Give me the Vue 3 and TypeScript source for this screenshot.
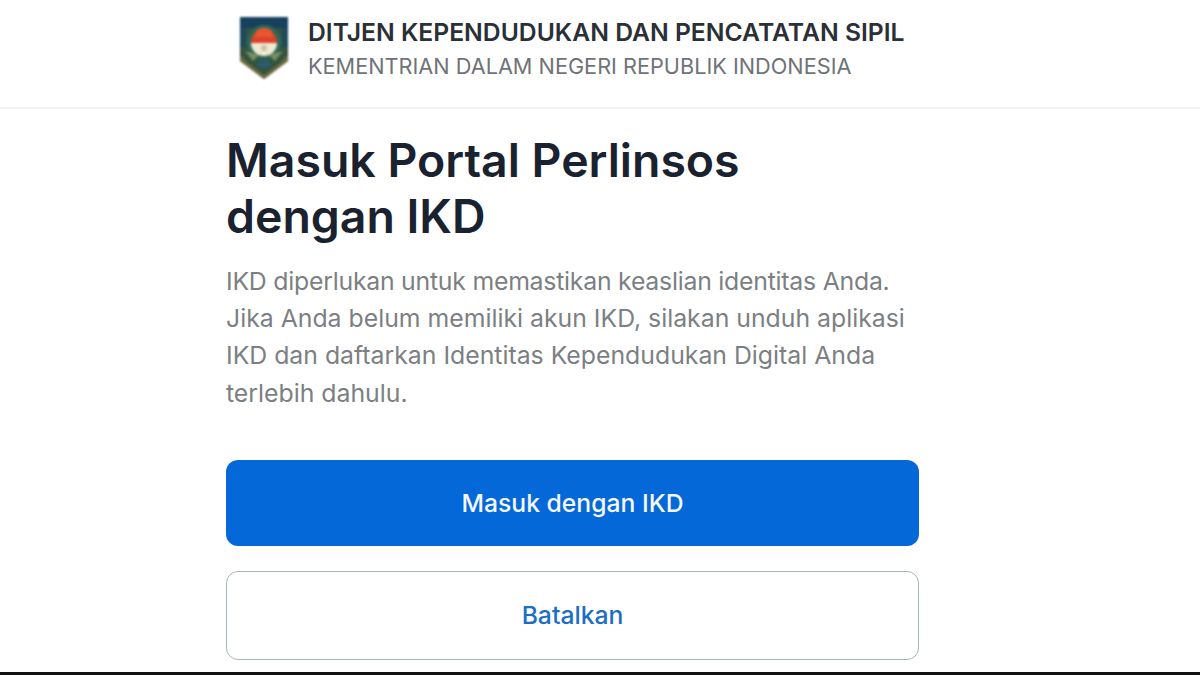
<script setup lang="ts">
const intro: string[] = [
  'IKD diperlukan untuk memastikan keaslian identitas Anda.',
  'Jika Anda belum memiliki akun IKD, silakan unduh aplikasi',
  'IKD dan daftarkan Identitas Kependudukan Digital Anda',
  'terlebih dahulu.',
]
</script>

<template>
  <div class="page">
    <header class="header">
      <svg class="logo" viewBox="0 0 50 63">
        <path d="M1 0H49V44L25 62L1 44Z" fill="#33543f" />
        <path d="M1 0H49V11H1Z" fill="#17405f" />
        <path d="M1 11H7V30H1ZM43 11H49V30H43Z" fill="#1d4a5c" />
        <path d="M1 38L9 46L25 58L41 46L49 38V44L25 62L1 44Z" fill="#6e6a3c" />
        <circle cx="25" cy="25" r="17" fill="#2f6a58" />
        <path d="M6 34L14 44L20 38ZM44 34L36 44L30 38Z" fill="#76905f" />
        <path d="M12 26A13 14 0 0 1 38 26Z" fill="#dd432a" />
        <path d="M17 15A8 4 0 0 1 33 15L34 20H16Z" fill="#e8562f" />
        <path d="M12 26H38A13 13 0 0 1 12 26Z" fill="#efe8d2" />
        <circle cx="25" cy="31" r="3" fill="#c9c2ab" />
        <ellipse cx="25" cy="47" rx="7" ry="4" fill="#2b5a70" />
      </svg>
      <div class="titles">
        <div class="title">DITJEN KEPENDUDUKAN DAN PENCATATAN SIPIL</div>
        <div class="subtitle">KEMENTRIAN DALAM NEGERI REPUBLIK INDONESIA</div>
      </div>
    </header>
    <main class="content">
      <h1>Masuk Portal Perlinsos<br />dengan IKD</h1>
      <p class="intro">
        <span v-for="line in intro" :key="line">{{ line }}</span>
      </p>
      <button class="btn primary">Masuk dengan IKD</button>
      <button class="btn secondary">Batalkan</button>
    </main>
    <div class="bottom"></div>
  </div>
</template>

<style scoped>
.page {
  width: 1200px;
  height: 675px;
  display: flex;
  flex-direction: column;
  background: #fff;
  font-family: Inter, "Liberation Sans", sans-serif;
  overflow: hidden;
}
.header {
  height: 109px;
  box-sizing: border-box;
  flex: none;
  display: flex;
  align-items: center;
  gap: 19px;
  padding: 0 0 10px 239px;
  border-bottom: 2px solid #f3f4f5;
}
.logo { flex: none; width: 50px; height: 63px; filter: blur(0.8px); }
.titles { display: flex; flex-direction: column; gap: 8px; margin-top: -2px; }
.title {
  font-size: 24.7px;
  line-height: 28px;
  font-weight: 600;
  color: #2b2f36;
  white-space: nowrap;
}
.subtitle {
  font-size: 21.7px;
  line-height: 24px;
  color: #6f7378;
  white-space: nowrap;
}
.content {
  flex: 1;
  min-height: 0;
  display: flex;
  flex-direction: column;
  width: 693px;
  margin-left: 226px;
  padding-top: 23px;
}
h1 {
  margin: 0;
  font-size: 46.4px;
  line-height: 56px;
  font-weight: 600;
  color: #1a2230;
}
.intro {
  margin: 19px 0 0;
  display: flex;
  flex-direction: column;
  font-size: 24.8px;
  line-height: 37.2px;
  color: #7c7f83;
  white-space: nowrap;
}
.intro span:first-child { letter-spacing: -0.23px; }
.btn {
  flex: none;
  width: 693px;
  box-sizing: border-box;
  font-family: inherit;
  font-size: 24.7px;
  font-weight: 500;
  border-radius: 12px;
}
.primary {
  height: 86px;
  margin-top: 48px;
  background: #0568d8;
  border: none;
  color: #f4f8fd;
}
.secondary {
  height: 89px;
  margin-top: 25px;
  background: #fff;
  border: 1px solid #a7b6bb;
  color: #1a6fc4;
}
.bottom {
  flex: none;
  height: 3px;
  background: #111;
}
</style>
